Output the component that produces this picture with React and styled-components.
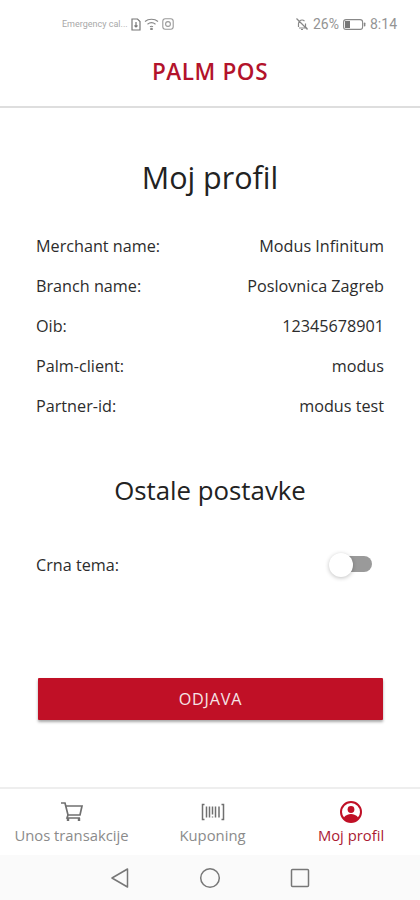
import React from "react";
import styled, { createGlobalStyle } from "styled-components";

const Global = createGlobalStyle`
  html, body { margin: 0; padding: 0; background: #fff; }
  * { box-sizing: border-box; }
`;
const Page = styled.div`
  width: 420px; height: 900px; background: #fff; display: flex; flex-direction: column;
  font-family: "Open Sans", sans-serif; color: #222; overflow: hidden;
`;
const StatusBar = styled.div`
  height: 46px; display: flex; align-items: center; justify-content: space-between;
  padding: 2px 23px 0 62px; color: #8a8a8a;
`;
const StatusGroup = styled.div`display: flex; align-items: center; gap: 3px;`;
const RightStatus = styled(StatusGroup)`gap: 4px;`;
const Tiny = styled.span`font-size: 9px; font-family: "Roboto", sans-serif; color: #a8a8a8; white-space: nowrap;`;
const StatusText = styled.span`font-size: 14px; font-family: "Roboto", sans-serif; color: #949494; white-space: nowrap;`;
const AppBar = styled.header`
  height: 62px; display: flex; align-items: center; justify-content: center; padding-bottom: 8px;
  border-bottom: 2px solid #dedede;
`;
const Brand = styled.h1`
  margin: 0; font-size: 22.5px; line-height: 30px; font-weight: 600; color: #b3132b; letter-spacing: 0.6px;
`;
const Main = styled.main`flex: 1; display: flex; flex-direction: column; padding: 0 36px;`;
const Title = styled.h2`
  margin: 47px 0 27px; font-size: 30.5px; line-height: 44px; font-weight: 400; text-align: center; color: #222;
`;
const Row = styled.div`
  height: 40px; display: flex; align-items: center; justify-content: space-between;
  font-size: 16.2px; color: #2c2c2c;
`;
const SubTitle = styled.h3`
  margin: 47px 0 36px; font-size: 25.8px; line-height: 34px; font-weight: 400; text-align: center; color: #222;
`;
const ToggleRow = styled(Row)`height: 44px; padding-right: 12px;`;
const Track = styled.div`
  position: relative; width: 37px; height: 16px; border-radius: 8px; background: #9a9a9a; margin-bottom: 3px;
`;
const Knob = styled.div`
  position: absolute; left: -6px; top: -3px; width: 24px; height: 24px; border-radius: 50%;
  background: #fff; box-shadow: 0 1px 4px rgba(0,0,0,.25);
`;
const LogoutButton = styled.button`
  display: block; margin: 91px 0 0 2px; width: 345px; height: 42px; border: 0; border-radius: 1px;
  background: #c01026; color: #f6e4e6; font: 400 16.2px "Open Sans", sans-serif; letter-spacing: 0.8px;
  box-shadow: 0 2px 3px rgba(0,0,0,.35);
`;
const TabBar = styled.nav`
  height: 68px; border-top: 2px solid #eeeeee; display: grid; grid-template-columns: 143px 139px 138px;
`;
const Tab = styled.div`
  display: flex; flex-direction: column; align-items: center; padding-top: 11px; gap: 1px;
  color: ${p => (p.$active ? "#ab1a33" : "#8b8b8b")};
  font-size: 14.8px; line-height: 20px; white-space: nowrap;
`;
const Icon = styled.svg`display: block; width: 24px; height: 24px; flex: none;`;
const SysNav = styled.div`
  height: 45px; background: #fafafa; display: grid; grid-template-columns: 90px 90px 90px;
  justify-content: center; align-items: center; justify-items: center;
`;

export default function App() {
  return (
    <Page>
      <Global />
      <StatusBar>
        <StatusGroup>
          <Tiny>Emergency cal...</Tiny>
          <svg width="10" height="13" viewBox="0 0 10 13" fill="none" stroke="#777" strokeWidth="1.2"><path d="M1 1h5.5L9 3.5V12H1z"/><path d="M5 4v5M3.5 7.5 5 9l1.500-1.500"/></svg>
          <svg width="15" height="12" viewBox="0 0 15 12" fill="none" stroke="#888" strokeWidth="1.1"><path d="M1 3.5c3.500-3 9.500-3 13 0M3.500 6.200c2.300-1.800 5.700-1.800 8 0M6 8.800c.9-.6 2.100-.6 3 0"/><circle cx="7.5" cy="11" r=".8" fill="#777"/></svg>
          <svg width="12" height="12" viewBox="0 0 12 12" fill="none" stroke="#999" strokeWidth="1.1"><rect x=".8" y=".8" width="10.4" height="10.4" rx="2.5"/><circle cx="6" cy="6" r="2.4"/></svg>
        </StatusGroup>
        <RightStatus>
          <svg width="14" height="14" viewBox="0 0 14 14" fill="none" stroke="#888" strokeWidth="1.2"><path d="M3.500 10V6.500a3.500 3.500 0 0 1 6-2.400M10.500 6.500V10l1 1H4M6 12.500h2M1.500 1.500l11 11"/></svg>
          <StatusText>26%</StatusText>
          <svg width="23" height="11" viewBox="0 0 23 11"><rect x=".6" y=".6" width="19" height="9.8" rx="2.5" fill="none" stroke="#888" strokeWidth="1.1"/><rect x="2" y="2" width="5" height="7" fill="#777"/><rect x="20.8" y="3.5" width="1.6" height="4" rx=".8" fill="#888"/></svg>
          <StatusText>8:14</StatusText>
        </RightStatus>
      </StatusBar>
      <AppBar><Brand>PALM POS</Brand></AppBar>
      <Main>
        <Title>Moj profil</Title>
        <Row><span>Merchant name:</span><span>Modus Infinitum</span></Row>
        <Row><span>Branch name:</span><span>Poslovnica Zagreb</span></Row>
        <Row><span>Oib:</span><span>12345678901</span></Row>
        <Row><span>Palm-client:</span><span>modus</span></Row>
        <Row><span>Partner-id:</span><span>modus test</span></Row>
        <SubTitle>Ostale postavke</SubTitle>
        <ToggleRow><span>Crna tema:</span><Track><Knob /></Track></ToggleRow>
        <LogoutButton>ODJAVA</LogoutButton>
      </Main>
      <TabBar>
        <Tab>
          <Icon viewBox="0 0 24 24" fill="none" stroke="#707070" strokeWidth="1.7"><path d="M1 3h4l3 12h12l2-9H6"/><path d="M8 15l-1 3h13"/><path d="M8 18v3M19 18v3" strokeWidth="2.4"/></Icon>
          Unos transakcije
        </Tab>
        <Tab>
          <Icon viewBox="0 0 24 24" fill="none" stroke="#707070" strokeWidth="1.5"><path d="M3.500 4.500H1.500v15h2M20.500 4.500h2v15h-2"/><path d="M5.500 6.500v11M8.500 6.500v11M11.500 6.500v8M14.500 6.500v11M18 6.500v11" /><path d="M11.500 16.500v1" /></Icon>
          Kuponing
        </Tab>
        <Tab $active>
          <Icon viewBox="0 0 24 24"><circle cx="12" cy="12" r="10" fill="none" stroke="#c01026" strokeWidth="2"/><circle cx="12" cy="9.5" r="3.4" fill="#c01026"/><path d="M4.500 18c2-3 4.800-4 7.500-4s5.500 1 7.500 4c-2 2.500-4.500 4-7.500 4s-5.500-1.500-7.500-4z" fill="#c01026"/></Icon>
          Moj profil
        </Tab>
      </TabBar>
      <SysNav>
        <svg width="20" height="22" viewBox="0 0 20 22" fill="none" stroke="#777" strokeWidth="1.5"><path d="M17.500 2 2 11l15.500 9z" strokeLinejoin="round"/></svg>
        <svg width="22" height="22" viewBox="0 0 22 22" fill="none" stroke="#777" strokeWidth="1.5"><circle cx="11" cy="11" r="9.3"/></svg>
        <svg width="20" height="20" viewBox="0 0 20 20" fill="none" stroke="#777" strokeWidth="1.5"><rect x="1.5" y="1.5" width="17" height="17" rx="1"/></svg>
      </SysNav>
    </Page>
  );
}
